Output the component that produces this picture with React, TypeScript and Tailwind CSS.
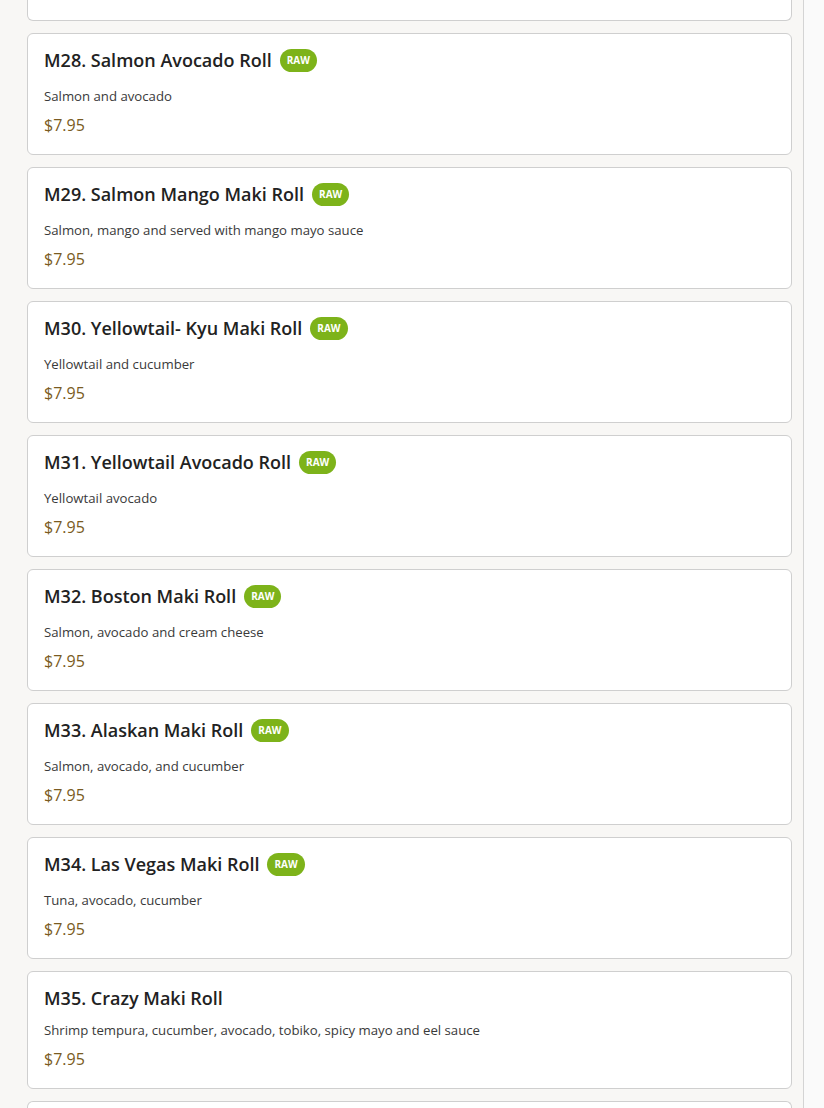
import React from "react";

type Item = {
    code: string;
    name: string;
    desc: string;
    price: string;
    raw?: boolean;
};

const items: Item[] = [
    { code: "M28", name: "Salmon Avocado Roll", desc: "Salmon and avocado", price: "$7.95", raw: true },
    { code: "M29", name: "Salmon Mango Maki Roll", desc: "Salmon, mango and served with mango mayo sauce", price: "$7.95", raw: true },
    { code: "M30", name: "Yellowtail- Kyu Maki Roll", desc: "Yellowtail and cucumber", price: "$7.95", raw: true },
    { code: "M31", name: "Yellowtail Avocado Roll", desc: "Yellowtail avocado", price: "$7.95", raw: true },
    { code: "M32", name: "Boston Maki Roll", desc: "Salmon, avocado and cream cheese", price: "$7.95", raw: true },
    { code: "M33", name: "Alaskan Maki Roll", desc: "Salmon, avocado, and cucumber", price: "$7.95", raw: true },
    { code: "M34", name: "Las Vegas Maki Roll", desc: "Tuna, avocado, cucumber", price: "$7.95", raw: true },
    { code: "M35", name: "Crazy Maki Roll", desc: "Shrimp tempura, cucumber, avocado, tobiko, spicy mayo and eel sauce", price: "$7.95" },
];

const MenuCard = ({ item }: { item: Item }) => {
    return (
        <div className="bg-white border border-[#cfcfcf] rounded-md px-4 pt-3 pb-[17px]">
            <div className={`flex items-center gap-2 h-7 ${item.raw ? "mb-3" : "mb-2"}`}>
                <h3 className="text-[18px] leading-7 font-semibold text-[#222]">
                    {item.code}. {item.name}
                </h3>
                {item.raw && (
                    <span className="inline-flex items-center justify-center h-[23px] px-[7px] rounded-full bg-[#7db31a] text-white text-[10px] font-bold">
                        RAW
                    </span>
                )}
            </div>
            <p className="text-[13.2px] leading-5 text-[#3a3a3a]">{item.desc}</p>
            <p className="mt-[7px] text-[16px] leading-6 text-[#7a5b22]">{item.price}</p>
        </div>
    );
};

export default function App() {
    return (
        <div className="min-h-[1108px] bg-[#fafafa] font-['Open_Sans',sans-serif]">
            <div className="w-[804px] min-h-[1108px] bg-[#f8f7f5] border-r border-[#d4d4d4] pl-[27px] pr-[11px] flex flex-col gap-3">
                <div className="h-[21px] bg-white border border-t-0 border-[#cfcfcf] rounded-b-md" />
                {items.map((item) => (
                    <MenuCard key={item.code} item={item} />
                ))}
                <div className="h-8 bg-white border border-b-0 border-[#cfcfcf] rounded-t-md" />
            </div>
        </div>
    );
}
